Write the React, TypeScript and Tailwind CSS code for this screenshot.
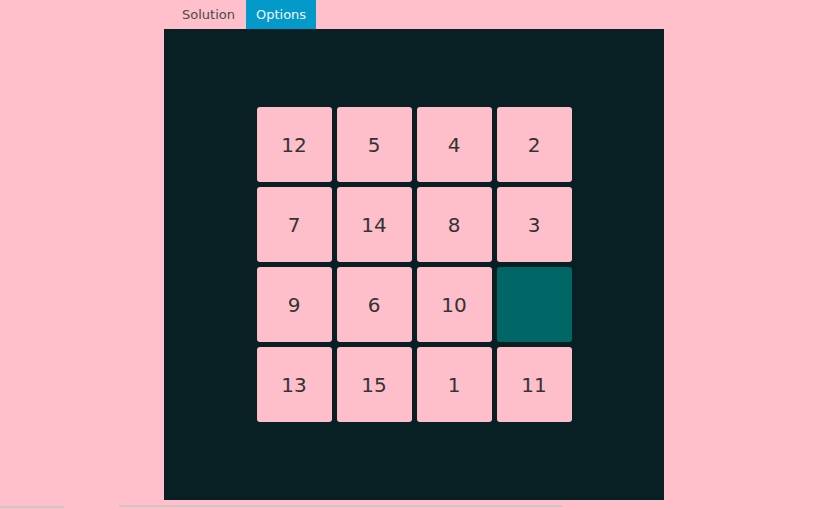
import { useState } from 'react'

const initial = [12, 5, 4, 2, 7, 14, 8, 3, 9, 6, 10, 0, 13, 15, 1, 11]

const App = () => {
  const [tab, setTab] = useState('Options')
  const [tiles] = useState(initial)

  return (
    <div className="relative h-[509px] w-[834px] overflow-hidden bg-[#ffc0cb] font-['DejaVu_Sans',sans-serif]">
      <div className="ml-[164px] flex h-[29px] text-[13px]">
        {['Solution', 'Options'].map(t => (
          <button
            key={t}
            onClick={() => setTab(t)}
            className={
              t === tab
                ? 'h-[29px] bg-[#0399c9] px-[10px] text-[#f0f8ff]'
                : 'h-[29px] pl-[18px] pr-[11px] text-[#4a4a4a]'
            }
          >
            {t}
          </button>
        ))}
      </div>
      <div className="ml-[164px] flex h-[471px] w-[500px] items-center justify-center bg-[#082023]">
        <div className="grid grid-cols-[repeat(4,75px)] gap-[5px]">
          {tiles.map(n =>
            n === 0 ? (
              <div key={n} className="h-[75px] w-[75px] rounded-[3px] bg-[#006666]" />
            ) : (
              <div
                key={n}
                className="flex h-[75px] w-[75px] items-center justify-center rounded-[3px] bg-[#ffbfca] text-[20px] text-[#333333]"
              >
                {n}
              </div>
            )
          )}
        </div>
      </div>
      <div className="flex items-start pt-[5px]">
        <div className="mt-[1px] h-[2px] w-[64px] bg-[#cfc4c6]" />
        <div className="ml-[55px] h-[2px] w-[443px] bg-[#cfc4c6]" />
      </div>
    </div>
  )
}

export default App
